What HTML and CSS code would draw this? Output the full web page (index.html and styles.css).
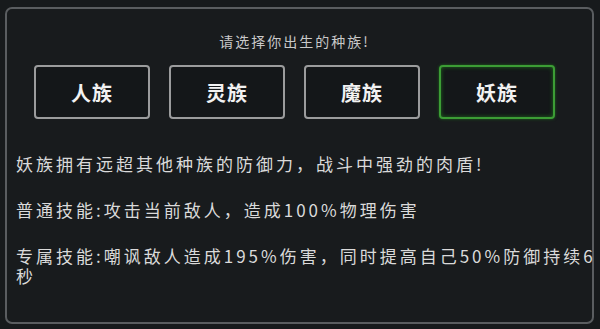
FILE: index.html
```html
<!DOCTYPE html>
<html lang="zh">
<head>
<meta charset="utf-8">
<title>选择种族</title>
<link rel="stylesheet" href="styles.css">
</head>
<body>
<div class="panel">
  <div class="title">请选择你出生的种族!</div>
  <div class="races">
    <div class="race">人族</div>
    <div class="race">灵族</div>
    <div class="race">魔族</div>
    <div class="race selected">妖族</div>
  </div>
  <div class="desc">
    <p>妖族拥有远超其他种族的防御力，战斗中强劲的肉盾!</p>
    <p>普通技能:攻击当前敌人，造成100%物理伤害</p>
    <p>专属技能:嘲讽敌人造成195%伤害，同时提高自己50%防御持续6秒</p>
  </div>
</div>
</body>
</html>
```

FILE: styles.css
```css
html, body {
  margin: 0;
  padding: 0;
  background: #171a1c;
  width: 600px;
  height: 329px;
  overflow: hidden;
}
body {
  font-family: "Noto Sans CJK SC", "Noto Sans", sans-serif;
  color: #d6d6d6;
}
.panel {
  box-sizing: border-box;
  margin: 7px 0 0 5px;
  width: 589px;
  height: 317px;
  border: 2px solid #5a5d60;
  border-radius: 7px;
  background: #181b1d;
}
.title {
  margin-top: 22px;
  text-align: center;
  font-size: 14px;
  line-height: 20px;
  letter-spacing: 2px;
  color: #c9c9c9;
  padding-right: 10px;
}
.races {
  display: flex;
  gap: 19px;
  margin-top: 14px;
  padding-left: 27px;
}
.race {
  box-sizing: border-box;
  width: 116px;
  height: 54px;
  border: 2px solid #9b9c9d;
  border-radius: 4px;
  background: #141719;
  display: flex;
  align-items: center;
  justify-content: center;
  font-size: 20px;
  font-weight: 700;
  color: #f2f2f2;
  letter-spacing: 1px;
}
.race.selected {
  border-color: #3c9d35;
  box-shadow: 0 0 3px #1e6a1c, inset 0 0 4px #1e6a1c;
}
.desc {
  margin-top: 35px;
  padding-left: 9px;
  margin-right: -6px;
  font-size: 17px;
  line-height: 20px;
  letter-spacing: 3px;
  color: #dadada;
}
.desc p {
  margin: 0 0 26px 0;
}
```
